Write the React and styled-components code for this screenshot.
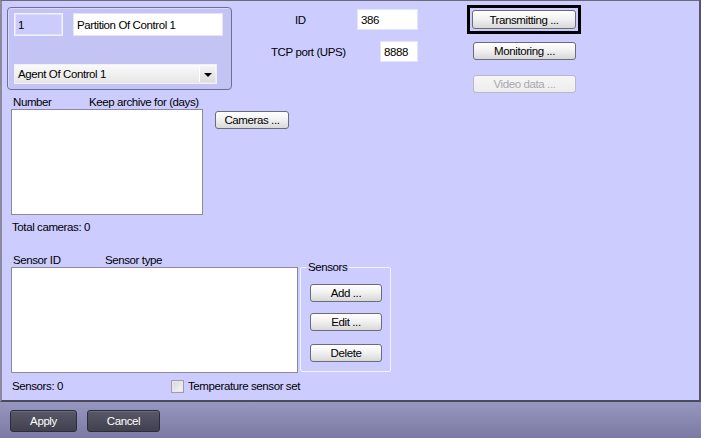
import React from "react";
import styled, { createGlobalStyle, css } from "styled-components";

const Global = createGlobalStyle`
  html, body { margin: 0; padding: 0; }
  body {
    width: 701px; height: 438px; overflow: hidden;
    font-family: "Liberation Sans", Arial, sans-serif;
    font-size: 11.5px; letter-spacing: -0.4px; color: #000;
  }
  * { box-sizing: border-box; }
`;

const Window = styled.div`
  width: 701px; height: 438px;
  display: flex; flex-direction: column;
`;

const Panel = styled.div`
  height: 402px;
  background: #ccccff;
  border-top: 1px solid #6a6a78;
  border-left: 2px solid #8a8a9c;
  border-right: 2px solid #55556a;
  border-bottom: 2px solid #4a4a5c;
  padding: 4px 0 0 5px;
  display: flex; flex-direction: column;
`;

const TopRow = styled.div`
  height: 86px;
  display: flex; align-items: flex-start;
`;

const GroupBox = styled.div`
  margin-top: 2px;
  width: 225px; height: 83px;
  border: 1px solid #6e6e96;
  border-radius: 4px;
  background: #c4c4f4;
  box-shadow: inset 1px 1px 0 #d8d8ff;
  padding: 5px 6px;
  display: flex; flex-direction: column;
`;

const FieldRow = styled.div`
  display: flex; gap: 10px;
`;

const Field = styled.div`
  width: ${(p) => p.$w}px;
  height: ${(p) => p.$h || 21}px;
  background: ${(p) => (p.$disabled ? "#ccccfc" : "#fff")};
  border: 1px solid ${(p) => (p.$disabled ? "#f2f2ff" : "#e4e4f4")};
  box-shadow: ${(p) => (p.$disabled ? "inset 0 0 0 1px #e0e0ff" : "none")};
  padding: 0 3px;
  display: flex; align-items: center;
  white-space: nowrap;
`;

const Select = styled.div`
  margin-top: 28px;
  width: 203px; height: 20px;
  border: 1px solid #f0f0f8;
  background: linear-gradient(#fafafa, #e6e6e6);
  display: flex; align-items: center;
  padding: 0 1px 0 3px;
`;

const SelectText = styled.span`
  flex: 1;
`;

const DropArrow = styled.span`
  width: 16px; height: 16px;
  background: linear-gradient(#f4f4f4, #dcdcdc);
  border-left: 1px solid #fff;
  display: flex; align-items: center; justify-content: center;
  &::after {
    content: "";
    border-left: 4px solid transparent;
    border-right: 4px solid transparent;
    border-top: 4px solid #000;
    margin-top: 1px;
  }
`;

const MidCol = styled.div`
  width: 186px;
  padding-top: 4px;
  display: flex; flex-direction: column; gap: 11px;
`;

const LabeledRow = styled.div`
  display: flex; align-items: center; justify-content: space-between;
  height: 21px;
`;

const Label = styled.span`
  padding-left: ${(p) => p.$pad || 0}px;
  white-space: nowrap;
`;

const RightCol = styled.div`
  margin-left: 49px;
  display: flex; flex-direction: column; align-items: flex-start;
`;

const FocusFrame = styled.div`
  border: 3px solid #000;
  padding: 2px;
`;

const Button = styled.button`
  font: inherit;
  letter-spacing: inherit;
  width: ${(p) => p.$w}px;
  height: ${(p) => p.$h || 18}px;
  margin: ${(p) => p.$m || "0"};
  padding: 0;
  border: 1px solid ${(p) => (p.disabled ? "#b8b8c8" : "#6c6c78")};
  border-radius: 3px;
  background: ${(p) =>
    p.disabled
      ? "linear-gradient(#f6f6f6, #ececec)"
      : "linear-gradient(#ffffff 0%, #f2f2f2 45%, #d8d8d8 100%)"};
  color: ${(p) => (p.disabled ? "#a8a8b0" : "#000")};
  display: flex; align-items: center; justify-content: center;
  white-space: nowrap;
  ${(p) =>
    p.$dark &&
    css`
      border: 1px solid #2c2c3a;
      background: linear-gradient(#585868, #40404e);
      color: #fff;
      box-shadow: inset 0 1px 0 #6a6a7a;
    `}
`;

const Section = styled.div`
  margin-left: ${(p) => p.$ml || 0}px;
  margin-top: ${(p) => p.$mt || 0}px;
  display: flex; flex-direction: ${(p) => (p.$col ? "column" : "row")};
  align-items: flex-start;
`;

const HeaderRow = styled.div`
  display: flex; height: 14px; line-height: 14px;
  padding-left: 2px;
`;

const HeaderCell = styled.span`
  width: ${(p) => p.$w}px;
  white-space: nowrap;
`;

const ListBox = styled.div`
  width: ${(p) => p.$w}px;
  height: 106px;
  background: #fff;
  border: 1px solid #8a8a9c;
`;

const StatusText = styled.div`
  margin-left: ${(p) => p.$ml || 0}px;
  margin-top: ${(p) => p.$mt || 0}px;
  line-height: 14px;
  white-space: nowrap;
`;

const Fieldset = styled.div`
  position: relative;
  margin-left: 2px;
  width: 91px; height: 105px;
  border: 1px solid #f4f4ff;
  border-radius: 2px;
  padding: 16px 0 0 9px;
  display: flex; flex-direction: column; gap: 11px;
`;

const Legend = styled.span`
  position: absolute;
  left: 5px; top: -8px;
  background: #ccccff;
  padding: 0 2px;
  line-height: 14px;
`;

const BottomRow = styled.div`
  margin-left: 5px; margin-top: 6px;
  display: flex; align-items: center;
  height: 14px;
`;

const BottomStatus = styled.span`
  width: 159px;
  white-space: nowrap;
`;

const CheckLabel = styled.label`
  display: flex; align-items: center; gap: 4px;
  white-space: nowrap;
`;

const CheckBox = styled.span`
  width: 13px; height: 13px;
  border: 1px solid #9c9cac;
  background: linear-gradient(135deg, #d8d8dc, #f6f6f8);
  box-shadow: inset 0 0 0 1px #e8e8ec;
`;

const Footer = styled.div`
  flex: 1;
  background: linear-gradient(#9696be, #7a7aa4);
  padding: 8px 0 0 10px;
  display: flex; gap: 10px; align-items: flex-start;
`;

export default function App() {
  return (
    <>
      <Global />
      <Window>
        <Panel>
          <TopRow>
            <GroupBox>
              <FieldRow>
                <Field $w={49} $h={23} $disabled>1</Field>
                <Field $w={150} $h={23}>Partition Of Control 1</Field>
              </FieldRow>
              <Select>
                <SelectText>Agent Of Control 1</SelectText>
                <DropArrow />
              </Select>
            </GroupBox>
            <MidCol>
              <LabeledRow>
                <Label $pad={63}>ID</Label>
                <Field $w={61}>386</Field>
              </LabeledRow>
              <LabeledRow>
                <Label $pad={39}>TCP port (UPS)</Label>
                <Field $w={38}>8888</Field>
              </LabeledRow>
            </MidCol>
            <RightCol>
              <FocusFrame>
                <Button $w={104} $h={19}>Transmitting ...</Button>
              </FocusFrame>
              <Button $w={103} $m="8px 0 0 6px">Monitoring ...</Button>
              <Button $w={103} $m="15px 0 0 6px" disabled>Video data ...</Button>
            </RightCol>
          </TopRow>

          <Section $ml={4} $mt={4} $col>
            <HeaderRow>
              <HeaderCell $w={76}>Number</HeaderCell>
              <HeaderCell $w={120}>Keep archive for (days)</HeaderCell>
            </HeaderRow>
            <Section>
              <ListBox $w={192} />
              <Button $w={74} $m="2px 0 0 12px">Cameras ...</Button>
            </Section>
          </Section>
          <StatusText $ml={5} $mt={5}>Total cameras: 0</StatusText>

          <Section $ml={4} $mt={19} $col>
            <HeaderRow>
              <HeaderCell $w={92}>Sensor ID</HeaderCell>
              <HeaderCell $w={120}>Sensor type</HeaderCell>
            </HeaderRow>
            <Section>
              <ListBox $w={287} />
              <Fieldset>
                <Legend>Sensors</Legend>
                <Button $w={72}>Add ...</Button>
                <Button $w={72}>Edit ...</Button>
                <Button $w={72} $m="2px 0 0 0">Delete</Button>
              </Fieldset>
            </Section>
          </Section>
          <BottomRow>
            <BottomStatus>Sensors: 0</BottomStatus>
            <CheckLabel>
              <CheckBox />
              <span>Temperature sensor set</span>
            </CheckLabel>
          </BottomRow>
        </Panel>
        <Footer>
          <Button $dark $w={67} $h={22}>Apply</Button>
          <Button $dark $w={73} $h={22}>Cancel</Button>
        </Footer>
      </Window>
    </>
  );
}
